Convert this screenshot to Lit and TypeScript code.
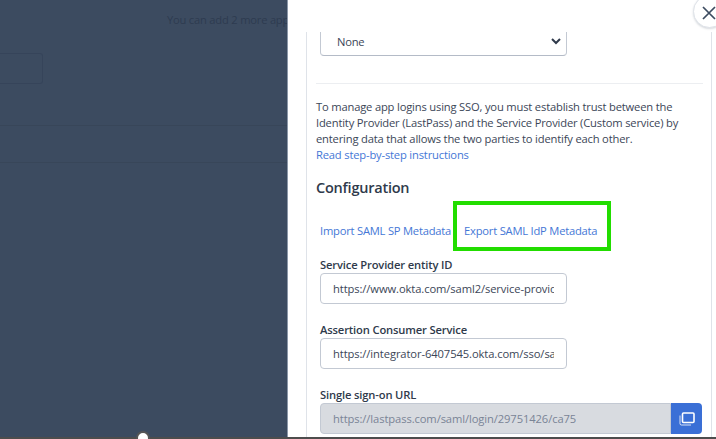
import { html, css, LitElement } from 'lit';
import { customElement } from 'lit/decorators.js';

@customElement('app-root')
export class AppRoot extends LitElement {
  static styles = css`
    :host {
      display: block;
      position: relative;
      width: 716px;
      height: 439px;
      overflow: hidden;
      font-family: "Open Sans", "Noto Sans", sans-serif;
      font-size: 11.2px;
      letter-spacing: -0.22px;
      color: #3b4657;
      background: #fff;
    }
    .page {
      display: flex;
      height: 100%;
    }

    /* dimmed page behind the drawer */
    .backdrop {
      width: 287px;
      flex: none;
      background: #3c4b60;
      border-right: 1px solid #8b97a8;
      overflow: hidden;
      display: flex;
      flex-direction: column;
    }
    .limit {
      margin: 12px 0 0 167px;
      white-space: nowrap;
      line-height: 16px;
      color: #2e3b50;
    }
    .search {
      width: 42px;
      height: 29px;
      margin-top: 25px;
      border: 1px solid #36445a;
      border-left: none;
      border-radius: 0 3px 3px 0;
    }
    .row {
      border-bottom: 1px solid #384659;
      height: 36px;
    }
    .row.first {
      margin-top: 5px;
    }

    /* drawer */
    .drawer {
      flex: 1;
      padding: 32px 4px 0 18px;
      min-width: 0;
    }
    .scroll {
      height: 407px;
      overflow: hidden;
      border-left: 1px solid #dfe3e9;
      border-right: 1px solid #dfe3e9;
      padding: 0 8px 0 9px;
    }
    .select {
      display: flex;
      align-items: center;
      justify-content: space-between;
      width: 247px;
      height: 32px;
      box-sizing: border-box;
      margin: -8px 0 0 4px;
      padding: 2px 4px 0 16px;
      border: 1px solid #c3c9d3;
      border-bottom-color: #b4bbc7;
      border-radius: 4px;
      background: #fff;
    }
    .select svg {
      display: block;
    }
    hr {
      border: none;
      border-top: 1px solid #eceef1;
      margin: 27px 0 0;
    }
    .intro {
      margin: 14.5px 0 0;
      line-height: 16.3px;
      letter-spacing: -0.18px;
      white-space: nowrap;
    }
    a {
      color: #4577d6;
      text-decoration: none;
    }
    .intro a {
      display: block;
    }
    h2 {
      margin: 13.5px 0 0;
      font-size: 14.5px;
      letter-spacing: -0.23px;
      font-weight: 600;
      line-height: 22px;
      color: #2f3a4b;
    }
    .tabs {
      display: flex;
      align-items: center;
      margin: 14px 0 0 4px;
      height: 34px;
    }
    .tab-gap {
      margin-left: 13px;
    }
    .field {
      margin: 0 0 0 4px;
    }
    .tabs + .field {
      margin-top: 10px;
    }
    .field + .field {
      margin-top: 18px;
    }
    label {
      display: block;
      font-weight: 600;
      letter-spacing: -0.15px;
      line-height: 16px;
      color: #2f3a4b;
    }
    .input {
      width: 247px;
      height: 31px;
      box-sizing: border-box;
      padding: 0 12px;
      display: flex;
      align-items: center;
      border: 1px solid #c3c9d3;
      border-radius: 4px;
      white-space: nowrap;
      letter-spacing: -0.1px;
      color: #3b4657;
    }
    .value {
      min-width: 0;
      overflow: hidden;
    }
    .group {
      display: flex;
      width: 382px;
      height: 31px;
    }
    .group .input {
      flex: 1;
      width: auto;
      background: #d8dbe0;
      color: #7a8496;
      border-radius: 4px 0 0 4px;
    }
    .copy {
      flex: none;
      width: 31px;
      background: #3a6fd6;
      border-radius: 0 4px 4px 0;
      display: flex;
      align-items: center;
      justify-content: center;
    }

    /* overlays */
    .highlight {
      position: absolute;
      left: 453px;
      top: 201px;
      width: 158px;
      height: 50px;
      box-sizing: border-box;
      border: 4px solid #22dd00;
    }
    .close {
      position: absolute;
      left: 693px;
      top: -5px;
      width: 33px;
      height: 33px;
      box-sizing: border-box;
      background: #fff;
      border: 1px solid #dfe3e9;
      border-radius: 50%;
      box-shadow: 0 1px 2px rgba(60, 75, 96, 0.2);
    }
    .close svg {
      display: block;
      margin: 8px 0 0 6px;
    }
    .edge {
      position: absolute;
      left: 0;
      right: 0;
      bottom: 0;
      height: 2px;
      background: #4d4d4d;
    }
    .handle {
      position: absolute;
      left: 136px;
      top: 431px;
      width: 14px;
      height: 14px;
      box-sizing: border-box;
      background: #fff;
      border: 2px solid #555;
      border-radius: 50%;
    }
  `;

  render() {
    return html`
      <div class="page">
        <div class="backdrop">
          <div class="limit">You can add 2 more apps</div>
          <div class="search"></div>
          <div class="row first"></div>
          <div class="row"></div>
        </div>
        <div class="drawer">
          <div class="scroll">
            <div class="select">
              <span>None</span>
              <svg width="12" height="12" viewBox="0 0 12 12" fill="none" stroke="#2f3a4b" stroke-width="2">
                <path d="M2 4l4 4 4-4" />
              </svg>
            </div>
            <hr />
            <p class="intro">
              To manage app logins using SSO, you must establish trust between the<br />
              Identity Provider (LastPass) and the Service Provider (Custom service) by<br />
              entering data that allows the two parties to identify each other.
              <a href="#">Read step-by-step instructions</a>
            </p>
            <h2>Configuration</h2>
            <div class="tabs">
              <a href="#">Import SAML SP Metadata</a>
              <a class="tab-gap" href="#">Export SAML IdP Metadata</a>
            </div>
            <div class="field">
              <label>Service Provider entity ID</label>
              <div class="input"><span class="value">https://www.okta.com/saml2/service-provid</span></div>
            </div>
            <div class="field">
              <label>Assertion Consumer Service</label>
              <div class="input"><span class="value">https://integrator-6407545.okta.com/sso/saml</span></div>
            </div>
            <div class="field">
              <label>Single sign-on URL</label>
              <div class="group">
                <div class="input"><span class="value">https://lastpass.com/saml/login/29751426/ca75</span></div>
                <div class="copy">
                  <svg width="16" height="14" viewBox="0 0 16 14" fill="none" stroke="#fff">
                    <rect x="3.5" y="1" width="11.5" height="9.5" rx="1" stroke-width="1.6" />
                    <path d="M1 3.5v8a1.5 1.5 0 0 0 1.5 1.5H12" stroke-width="1" opacity="0.8" />
                  </svg>
                </div>
              </div>
            </div>
          </div>
        </div>
      </div>
      <div class="highlight"></div>
      <div class="close">
        <svg width="19" height="19" viewBox="0 0 19 19" fill="none" stroke="#3c4b60" stroke-width="1.7">
          <path d="M3 3l12 12M15 3L3 15" />
        </svg>
      </div>
      <div class="edge"></div>
      <div class="handle"></div>
    `;
  }
}
